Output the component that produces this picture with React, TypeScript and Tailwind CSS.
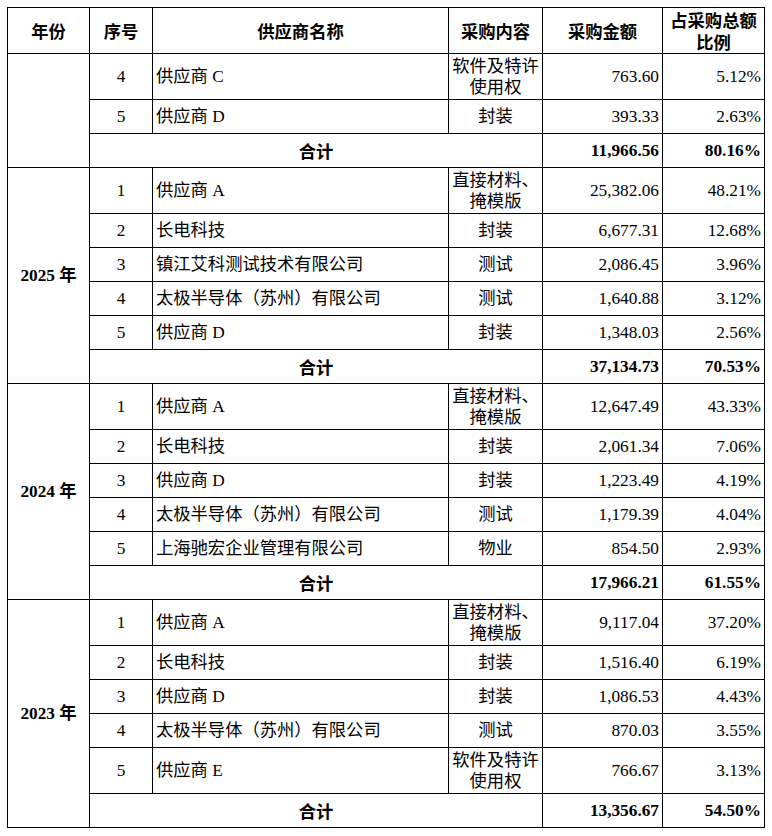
import React from "react";

type Row = { no: string; name: string; content: string[]; amount: string; pct: string };
type Block = { year: string; rows: Row[]; total: [string, string] };

const blocks: Block[] = [
  {
    year: "",
    rows: [
      { no: "4", name: "供应商 C", content: ["软件及特许", "使用权"], amount: "763.60", pct: "5.12%" },
      { no: "5", name: "供应商 D", content: ["封装"], amount: "393.33", pct: "2.63%" },
    ],
    total: ["11,966.56", "80.16%"],
  },
  {
    year: "2025 年",
    rows: [
      { no: "1", name: "供应商 A", content: ["直接材料、", "掩模版"], amount: "25,382.06", pct: "48.21%" },
      { no: "2", name: "长电科技", content: ["封装"], amount: "6,677.31", pct: "12.68%" },
      { no: "3", name: "镇江艾科测试技术有限公司", content: ["测试"], amount: "2,086.45", pct: "3.96%" },
      { no: "4", name: "太极半导体（苏州）有限公司", content: ["测试"], amount: "1,640.88", pct: "3.12%" },
      { no: "5", name: "供应商 D", content: ["封装"], amount: "1,348.03", pct: "2.56%" },
    ],
    total: ["37,134.73", "70.53%"],
  },
  {
    year: "2024 年",
    rows: [
      { no: "1", name: "供应商 A", content: ["直接材料、", "掩模版"], amount: "12,647.49", pct: "43.33%" },
      { no: "2", name: "长电科技", content: ["封装"], amount: "2,061.34", pct: "7.06%" },
      { no: "3", name: "供应商 D", content: ["封装"], amount: "1,223.49", pct: "4.19%" },
      { no: "4", name: "太极半导体（苏州）有限公司", content: ["测试"], amount: "1,179.39", pct: "4.04%" },
      { no: "5", name: "上海驰宏企业管理有限公司", content: ["物业"], amount: "854.50", pct: "2.93%" },
    ],
    total: ["17,966.21", "61.55%"],
  },
  {
    year: "2023 年",
    rows: [
      { no: "1", name: "供应商 A", content: ["直接材料、", "掩模版"], amount: "9,117.04", pct: "37.20%" },
      { no: "2", name: "长电科技", content: ["封装"], amount: "1,516.40", pct: "6.19%" },
      { no: "3", name: "供应商 D", content: ["封装"], amount: "1,086.53", pct: "4.43%" },
      { no: "4", name: "太极半导体（苏州）有限公司", content: ["测试"], amount: "870.03", pct: "3.55%" },
      { no: "5", name: "供应商 E", content: ["软件及特许", "使用权"], amount: "766.67", pct: "3.13%" },
    ],
    total: ["13,356.67", "54.50%"],
  },
];

const cell = "border border-black px-[3px] align-middle";
const head = "font-['Noto_Sans_CJK_SC',sans-serif] font-bold";

export default function App() {
  return (
    <div className="bg-white w-[772px] h-[836px] pt-[7px] pl-[7px] font-['Liberation_Serif','Noto_Sans_CJK_SC',serif] text-[17.3px] text-black">
      <table className="table-fixed border-collapse w-[757px]">
        <colgroup>
          <col className="w-[82px]" />
          <col className="w-[63px]" />
          <col className="w-[296px]" />
          <col className="w-[94px]" />
          <col className="w-[120px]" />
          <col className="w-[102px]" />
        </colgroup>
        <thead>
          <tr className="h-[46px]">
            <th className={`${cell} ${head} text-center`}>年份</th>
            <th className={`${cell} ${head} text-center`}>序号</th>
            <th className={`${cell} ${head} text-center`}>供应商名称</th>
            <th className={`${cell} ${head} text-center`}>采购内容</th>
            <th className={`${cell} ${head} text-center`}>采购金额</th>
            <th className={`${cell} ${head} text-center leading-[22px] py-0`}>
              <div className="flex flex-col items-center">
                <span>占采购总额</span>
                <span>比例</span>
              </div>
            </th>
          </tr>
        </thead>
        <tbody>
          {blocks.map((b, bi) => (
            <React.Fragment key={bi}>
              {b.rows.map((r, ri) => (
                <tr key={ri} className={r.content.length > 1 ? "h-[46px]" : "h-[34px]"}>
                  {ri === 0 && (
                    <td rowSpan={b.rows.length + 1} className={`${cell} text-center font-bold`}>
                      {b.year}
                    </td>
                  )}
                  <td className={`${cell} text-center`}>{r.no}</td>
                  <td className={`${cell} text-left whitespace-nowrap`}>{r.name}</td>
                  <td className={`${cell} text-center leading-[21px] whitespace-nowrap`}>
                    {r.content.map((c, ci) => (
                      <React.Fragment key={ci}>
                        {ci > 0 && <br />}
                        {c}
                      </React.Fragment>
                    ))}
                  </td>
                  <td className={`${cell} text-right`}>{r.amount}</td>
                  <td className={`${cell} text-right`}>{r.pct}</td>
                </tr>
              ))}
              <tr className="h-[34px]">
                <td colSpan={3} className={`${cell} ${head} text-center`}>
                  合计
                </td>
                <td className={`${cell} text-right font-bold`}>{b.total[0]}</td>
                <td className={`${cell} text-right font-bold`}>{b.total[1]}</td>
              </tr>
            </React.Fragment>
          ))}
        </tbody>
      </table>
    </div>
  );
}
